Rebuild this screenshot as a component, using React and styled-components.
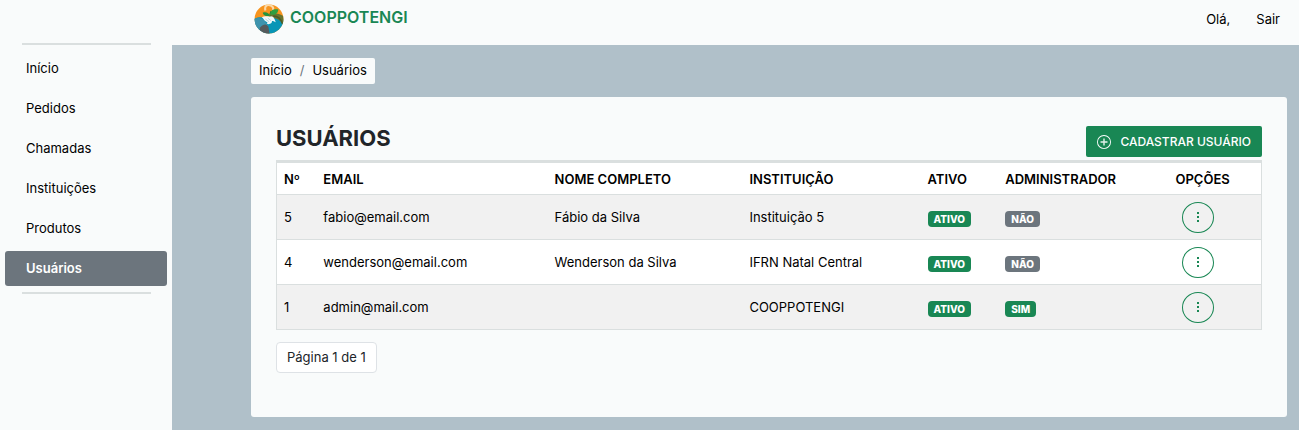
import React from "react";
import styled, { createGlobalStyle, css } from "styled-components";

const GlobalStyle = createGlobalStyle`
  *, *::before, *::after { box-sizing: border-box; }
  body {
    margin: 0;
    background: #b0c0c9;
    color: #000;
    font-family: Inter, "Open Sans", sans-serif;
    font-size: 13px;
    line-height: 20px;
  }
  a { color: inherit; text-decoration: none; }
  button { font-family: inherit; cursor: pointer; }
`;

const Shell = styled.div`
  display: grid;
  grid-template-columns: 172px minmax(0, 1fr);
  min-height: 100vh;
`;

const Sidebar = styled.aside`
  background: #f9fbfb;
  padding: 43px 5px 0;
`;

const Divider = styled.hr`
  height: 2px;
  margin: 0 16px 0 17px;
  border: 0;
  background: #dadfdf;
`;

const Menu = styled.nav`
  display: flex;
  flex-direction: column;
  gap: 5px;
  padding: 6px 0;
`;

const MenuLink = styled.a`
  padding: 7px 21px 8px;
  border-radius: 3px;
  ${({ $active }) =>
    $active &&
    css`
      background: #6c757d;
      color: #fff;
      font-weight: 600;
    `}
`;

const Column = styled.div`
  display: flex;
  flex-direction: column;
`;

const Topbar = styled.header`
  display: flex;
  align-items: flex-start;
  justify-content: space-between;
  height: 45px;
  padding: 4px 19px 0 82px;
  background: #f9fbfb;
`;

const Brand = styled.a`
  display: flex;
  align-items: flex-start;
  gap: 6px;
  color: #198754;
  font-size: 16px;
  line-height: 26px;
  font-weight: 600;
`;

const Account = styled.nav`
  display: flex;
  gap: 26px;
  padding-top: 5px;
`;

const Main = styled.main`
  padding: 13px 12px 13px 79px;
`;

const Breadcrumb = styled.nav`
  display: inline-flex;
  gap: 8px;
  padding: 2px 8px 4px;
  border-radius: 2px;
  background: #f9fbfb;
  vertical-align: top;
`;

const Slash = styled.span`
  color: #6c757d;
`;

const Card = styled.section`
  margin-top: 13px;
  min-height: 320px;
  padding: 27px 25px;
  border-radius: 3px;
  background: #f9fbfb;
`;

const CardHead = styled.div`
  display: flex;
  justify-content: space-between;
  align-items: flex-start;
  height: 36px;
`;

const Title = styled.h1`
  margin: 0;
  color: #212529;
  font-size: 22px;
  line-height: 28px;
  font-weight: 700;
`;

const AddButton = styled.button`
  display: flex;
  align-items: center;
  gap: 9px;
  height: 31px;
  margin-top: 2px;
  padding: 0 11px;
  border: 0;
  border-radius: 2px;
  background: #198754;
  color: #fff;
  font-size: 12px;
  font-weight: 500;
`;

const Table = styled.table`
  width: 100%;
  table-layout: fixed;
  border-collapse: separate;
  border-spacing: 0;
  border: 1px solid #dadfdf;
  border-top-width: 3px;
  border-bottom: 0;
  background: #fff;
`;

const Col = styled.col`
  width: ${({ $share }) => $share}%;
`;

const HeadCell = styled.th`
  height: 32px;
  padding: 0 7px;
  border-bottom: 1px solid #dadfdf;
  text-align: left;
  font-size: 13px;
  font-weight: 600;
  white-space: nowrap;
`;

const Row = styled.tr`
  &:nth-child(odd) { background: #f1f1f1; }
`;

const Cell = styled.td`
  height: 45px;
  padding: 0 7px;
  border-bottom: 1px solid #dadfdf;
  white-space: nowrap;
`;

const OptionsCell = styled(Cell)`
  padding-left: 14px;
`;

const Badge = styled.span`
  display: inline-block;
  margin-top: 3px;
  padding: 0 6px;
  border-radius: 4px;
  background: ${({ $on }) => ($on ? "#198754" : "#6c757d")};
  color: #fff;
  font-size: 10px;
  line-height: 16px;
  font-weight: 800;
  vertical-align: middle;
`;

const OptionsButton = styled.button`
  display: flex;
  align-items: center;
  justify-content: center;
  width: 32px;
  height: 31px;
  padding: 0;
  border: 1px solid #198754;
  border-radius: 50%;
  background: transparent;
  color: #198754;
`;

const PageInfo = styled.div`
  display: inline-block;
  margin-top: 12px;
  padding: 5px 10px;
  border: 1px solid #dee2e6;
  border-radius: 4px;
  background: #fff;
  color: #212529;
  line-height: 19px;
`;

function Logo() {
  return (
    <svg width="30" height="30" viewBox="0 0 100 100" aria-hidden="true">
      <defs>
        <clipPath id="disc">
          <circle cx="50" cy="50" r="48" />
        </clipPath>
      </defs>
      <g clipPath="url(#disc)">
        <rect width="100" height="100" fill="#f7941e" />
        <path d="M0 50 C14 42 28 44 40 46 L60 44 L100 52 V100 H0Z" fill="#0795b6" />
        <path d="M0 50 C12 44 24 46 34 54 L46 72 L30 92 H0Z" fill="#3e93ad" />
        <path d="M20 78 C32 64 44 66 48 76 L52 100 H16Z" fill="#555a5c" />
        <path d="M54 36 C68 27 90 32 100 42 V74 C90 54 74 45 52 45Z" fill="#69732c" />
        <path d="M64 40 C78 40 90 50 95 66" fill="none" stroke="#4d5b26" strokeWidth="5" />
      </g>
      <path d="M38 22 C34 6 44 2 52 4 C62 6 66 14 63 20" fill="none" stroke="#fbd9a8" strokeWidth="7" />
      <path d="M26 44 C36 38 46 43 54 41 C66 39 68 50 73 61 C67 59 64 56 60 57 C61 64 52 70 42 66 C46 64 46 61 41 59 C33 56 32 48 26 44Z" fill="#f1f7f8" />
      <path d="M38 50 L50 59 M46 47 L57 56" stroke="#b4d3da" strokeWidth="3" />
      <path d="M53 42 C53 34 54 29 57 23" fill="none" stroke="#267a37" strokeWidth="4" />
      <path d="M53 39 C42 43 31 38 29 29 C40 25 50 30 53 39Z" fill="#24933e" />
      <path d="M55 35 C54 21 65 15 81 18 C80 32 69 39 55 35Z" fill="#2e9e3f" />
    </svg>
  );
}

function PlusCircle() {
  return (
    <svg width="14" height="14" viewBox="0 0 16 16" fill="currentColor" aria-hidden="true">
      <path d="M8 15A7 7 0 1 1 8 1a7 7 0 0 1 0 14m0 1A8 8 0 1 0 8 0a8 8 0 0 0 0 16" />
      <path d="M8 4a.5.5 0 0 1 .5.5v3h3a.5.5 0 0 1 0 1h-3v3a.5.5 0 0 1-1 0v-3h-3a.5.5 0 0 1 0-1h3v-3A.5.5 0 0 1 8 4" stroke="currentColor" strokeWidth="0.4" />
    </svg>
  );
}

function Dots() {
  return (
    <svg width="14" height="13" viewBox="0 0 14 13" fill="currentColor" aria-hidden="true">
      <rect x="6" y="1" width="2" height="2" />
      <rect x="6" y="5" width="2" height="2" />
      <rect x="6" y="9" width="2" height="2" />
    </svg>
  );
}

const menu = ["Início", "Pedidos", "Chamadas", "Instituições", "Produtos", "Usuários"];

const columns = [
  { label: "Nº", share: 4 },
  { label: "EMAIL", share: 23.5 },
  { label: "NOME COMPLETO", share: 19.8 },
  { label: "INSTITUIÇÃO", share: 18.1 },
  { label: "ATIVO", share: 7.9 },
  { label: "ADMINISTRADOR", share: 17.3 },
  { label: "OPÇÕES", share: 9.4 },
];

const users = [
  { id: 5, email: "fabio@email.com", name: "Fábio da Silva", org: "Instituição 5", admin: false },
  { id: 4, email: "wenderson@email.com", name: "Wenderson da Silva", org: "IFRN Natal Central", admin: false },
  { id: 1, email: "admin@mail.com", name: "", org: "COOPPOTENGI", admin: true },
];

export default function App() {
  return (
    <>
      <GlobalStyle />
      <Shell>
        <Sidebar>
          <Divider />
          <Menu aria-label="Menu">
            {menu.map((item) => (
              <MenuLink key={item} href="#" $active={item === "Usuários"}>
                {item}
              </MenuLink>
            ))}
          </Menu>
          <Divider />
        </Sidebar>
        <Column>
          <Topbar>
            <Brand href="#">
              <Logo />
              COOPPOTENGI
            </Brand>
            <Account>
              <span>Olá,</span>
              <a href="#">Sair</a>
            </Account>
          </Topbar>
          <Main>
            <Breadcrumb>
              <a href="#">Início</a>
              <Slash>/</Slash>
              <span>Usuários</span>
            </Breadcrumb>
            <Card>
              <CardHead>
                <Title>USUÁRIOS</Title>
                <AddButton type="button">
                  <PlusCircle />
                  CADASTRAR USUÁRIO
                </AddButton>
              </CardHead>
              <Table>
                <colgroup>
                  {columns.map((c) => (
                    <Col key={c.label} $share={c.share} />
                  ))}
                </colgroup>
                <thead>
                  <tr>
                    {columns.map((c) => (
                      <HeadCell key={c.label} scope="col">
                        {c.label}
                      </HeadCell>
                    ))}
                  </tr>
                </thead>
                <tbody>
                  {users.map((u) => (
                    <Row key={u.id}>
                      <Cell>{u.id}</Cell>
                      <Cell>{u.email}</Cell>
                      <Cell>{u.name}</Cell>
                      <Cell>{u.org}</Cell>
                      <Cell>
                        <Badge $on>ATIVO</Badge>
                      </Cell>
                      <Cell>
                        <Badge $on={u.admin}>{u.admin ? "SIM" : "NÃO"}</Badge>
                      </Cell>
                      <OptionsCell>
                        <OptionsButton type="button" aria-label="Opções">
                          <Dots />
                        </OptionsButton>
                      </OptionsCell>
                    </Row>
                  ))}
                </tbody>
              </Table>
              <PageInfo>Página 1 de 1</PageInfo>
            </Card>
          </Main>
        </Column>
      </Shell>
    </>
  );
}
